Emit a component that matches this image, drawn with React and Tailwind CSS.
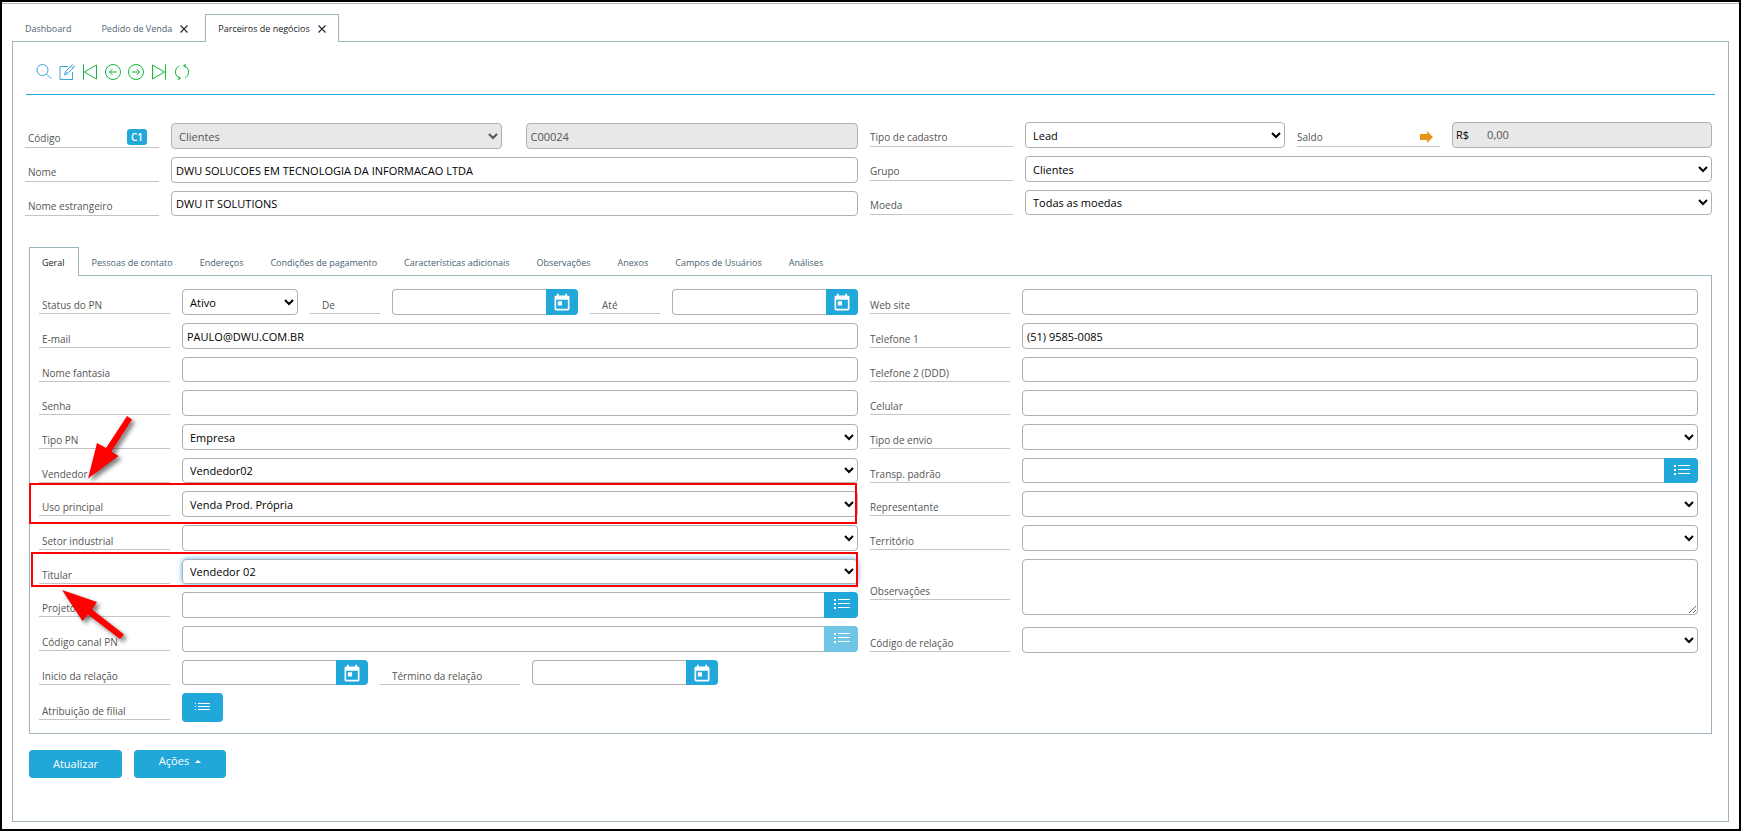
import { useState } from "react";
import { MdToday } from "react-icons/md";

const openTabs = [
    { id: "dashboard", title: "Dashboard", closable: false },
    { id: "pedido", title: "Pedido de Venda", closable: true },
    { id: "parceiros", title: "Parceiros de negócios", closable: true },
];

const formTabs = [
    "Geral",
    "Pessoas de contato",
    "Endereços",
    "Condições de pagamento",
    "Características adicionais",
    "Observações",
    "Anexos",
    "Campos de Usuários",
    "Análises",
];

function Icon({ children, className = "" }) {
    return (
        <svg viewBox="0 0 16 16" className={`w-4 h-4 ${className}`} fill="none" stroke="currentColor" strokeWidth="1">
            {children}
        </svg>
    );
}

const toolbar = [
    {
        title: "Pesquisar",
        color: "text-[#3aa5dc]",
        icon: <><circle cx="6.5" cy="6" r="5.5" /><path d="M10.5 10l5 5" /></>,
    },
    {
        title: "Editar",
        color: "text-[#3aa5dc]",
        icon: <><path d="M9 2.5H1v13h12.500V8" /><path d="M5.500 11l1-3.500L13.500.8l2 2-7 6.800zM12 2.300l2 2M6.500 7.700l2 2" /></>,
    },
    {
        title: "Primeiro",
        color: "text-[#14b53c]",
        icon: <path d="M1.500 .5v15M14.500 1v14L2.500 8z" />,
    },
    {
        title: "Anterior",
        color: "text-[#14b53c]",
        icon: <><circle cx="8" cy="8" r="7.500" /><path d="M12 8H4.500M7.500 5l-3 3 3 3" /></>,
    },
    {
        title: "Próximo",
        color: "text-[#14b53c]",
        icon: <><circle cx="8" cy="8" r="7.500" /><path d="M4 8h7.500M8.500 5l3 3-3 3" /></>,
    },
    {
        title: "Último",
        color: "text-[#14b53c]",
        icon: <path d="M14.500 .5v15M1.500 1v14l12-7z" />,
    },
    {
        title: "Atualizar registro",
        color: "text-[#14b53c]",
        icon: <><path d="M6.500 14.500C3.500 14 1.500 11.300 1.500 8c0-2.500 1.300-4.800 3.300-5.900M4.300 12.300l2.200 2.200-2.500 1" /><path d="M9.500 1.500c3 .5 5 3.200 5 6.500 0 2.500-1.300 4.800-3.300 5.900M11.700 3.700L9.500 1.500l2.500-1" /></>,
    },
];

function ListIcon() {
    return (
        <svg viewBox="0 0 16 10" className="w-4 h-[10px]" fill="currentColor">
            <path d="M0 0h2v2H0zM0 4h2v2H0zM0 8h2v2H0zM4 0h12v1H4zM4 4h12v1H4zM4 8h12v1H4z" />
        </svg>
    );
}

const control = "min-w-0 h-full rounded-[4px] border border-[#b0b0b0] text-[11px] text-black";
const disabledControl = "disabled:bg-[#e8e8e8] disabled:text-[#555] disabled:opacity-100";

function Row({ children, className = "" }) {
    return <div className={`flex gap-3 h-[26px] nth-[3n]:h-[25px] ${className}`}>{children}</div>;
}

function Label({ htmlFor, children, extra, className = "pb-px" }) {
    return (
        <div className={`h-[25px] shrink-0 flex items-end justify-between border-b border-[#c4c4c4] ${className}`}>
            <label htmlFor={htmlFor} className="text-[10px] leading-[14px] text-[#555] whitespace-nowrap">
                {children}
            </label>
            {extra}
        </div>
    );
}

function TextInput({ id, value = "", disabled, className = "flex-1" }) {
    return (
        <input
            id={id}
            type="text"
            defaultValue={value}
            disabled={disabled}
            className={`${control} ${disabledControl} px-1 ${className}`}
        />
    );
}

function Select({ id, value = "", disabled, className = "" }) {
    return (
        <select id={id} disabled={disabled} className={`${control} ${disabledControl} flex-1 px-[3px] ${className}`}>
            <option>{value}</option>
        </select>
    );
}

function DateInput({ id, title }) {
    return (
        <div className="flex h-full w-[186px]">
            <input id={id} type="text" className={`${control} flex-1 rounded-r-none border-r-0 px-1`} />
            <button type="button" aria-label={title} className="w-8 shrink-0 rounded-r-[4px] bg-[#21a7d9] pt-[2px] text-white flex items-center justify-center">
                <MdToday size={20} />
            </button>
        </div>
    );
}

function LookupInput({ id, title, disabled }) {
    return (
        <div className="flex flex-1 h-full">
            <input id={id} type="text" className={`${control} flex-1 rounded-r-none border-r-0 px-1`} />
            <button
                type="button"
                aria-label={title}
                disabled={disabled}
                className="w-[34px] shrink-0 rounded-r-[4px] bg-[#21a7d9] pb-[2px] pl-[2px] text-white flex items-center justify-center disabled:opacity-65"
            >
                <ListIcon />
            </button>
        </div>
    );
}

function Header() {
    const left = "w-[134px] pl-[3px] pb-[2px]";
    const right = "w-[143px] pb-[2px]";

    return (
        <div className="mt-[27px] ml-3 mr-4 grid grid-cols-[833fr_842fr] gap-3">
            <div className="flex flex-col gap-2 pt-px">
                <Row>
                    <Label
                        htmlFor="codigo"
                        className={left}
                        extra={<span className="mr-3 h-4 rounded-[3px] bg-[#21a7d9] px-1 text-[10px] leading-4 font-semibold text-white">C1</span>}
                    >
                        Código
                    </Label>
                    <div className="flex flex-1 gap-6">
                        <Select id="codigo" value="Clientes" disabled />
                        <TextInput id="codigo-pn" value="C00024" disabled />
                    </div>
                </Row>
                <Row>
                    <Label htmlFor="nome" className={left}>Nome</Label>
                    <TextInput id="nome" value="DWU SOLUCOES EM TECNOLOGIA DA INFORMACAO LTDA" />
                </Row>
                <Row>
                    <Label htmlFor="nome-estrangeiro" className={left}>Nome estrangeiro</Label>
                    <TextInput id="nome-estrangeiro" value="DWU IT SOLUTIONS" />
                </Row>
            </div>
            <div className="flex flex-col gap-2">
                <Row>
                    <Label htmlFor="tipo-cadastro" className={right}>Tipo de cadastro</Label>
                    <Select id="tipo-cadastro" value="Lead" />
                    <Label
                        htmlFor="saldo"
                        className={right}
                        extra={
                            <svg viewBox="0 0 13 12" className="mr-[7px] mb-px w-[13px] h-3" fill="#e6951a">
                                <path d="M0 3h7V0l6 6-6 6V9H0z" />
                            </svg>
                        }
                    >
                        Saldo
                    </Label>
                    <div className={`${control} flex flex-1 items-center bg-[#e8e8e8] px-[3px]`}>
                        <span>R$</span>
                        <input id="saldo" type="text" disabled defaultValue="0,00" className="ml-[18px] min-w-0 flex-1 text-[#555]" />
                    </div>
                </Row>
                <Row>
                    <Label htmlFor="grupo" className={right}>Grupo</Label>
                    <Select id="grupo" value="Clientes" />
                </Row>
                <Row>
                    <Label htmlFor="moeda" className={right}>Moeda</Label>
                    <Select id="moeda" value="Todas as moedas" />
                </Row>
            </div>
        </div>
    );
}

function GeneralLeft() {
    const label = "w-[131px] pl-[3px] pb-px";

    return (
        <div className="relative flex flex-col gap-2">
            <Row>
                <Label htmlFor="status" className={label}>Status do PN</Label>
                <Select id="status" value="Ativo" />
                <Label htmlFor="de" className="w-[70px] pl-3 pb-px">De</Label>
                <DateInput id="de" title="Escolher data inicial" />
                <Label htmlFor="ate" className="w-[70px] pl-3 pb-px">Até</Label>
                <DateInput id="ate" title="Escolher data final" />
            </Row>
            <Row>
                <Label htmlFor="email" className={label}>E-mail</Label>
                <TextInput id="email" value="PAULO@DWU.COM.BR" />
            </Row>
            <Row>
                <Label htmlFor="fantasia" className={label}>Nome fantasia</Label>
                <TextInput id="fantasia" />
            </Row>
            <Row>
                <Label htmlFor="senha" className={label}>Senha</Label>
                <TextInput id="senha" />
            </Row>
            <Row>
                <Label htmlFor="tipo-pn" className={label}>Tipo PN</Label>
                <Select id="tipo-pn" value="Empresa" />
            </Row>
            <Row>
                <Label htmlFor="vendedor" className={label}>Vendedor</Label>
                <Select id="vendedor" value="Vendedor02" />
            </Row>
            <Row className="relative">
                <Label htmlFor="uso" className={label}>Uso principal</Label>
                <Select id="uso" value="Venda Prod. Própria" />
                <div className="absolute -top-2 right-px -bottom-[7px] -left-[10px] border-2 border-[#ff0000] pointer-events-none" />
            </Row>
            <Row>
                <Label htmlFor="setor" className={label}>Setor industrial</Label>
                <Select id="setor" />
            </Row>
            <Row className="relative">
                <Label htmlFor="titular" className={label}>Titular</Label>
                <Select id="titular" value="Vendedor 02" className="shadow-[0_0_5px_#4db5f5]" />
                <div className="absolute -top-[7px] right-0 -bottom-[3px] -left-2 border-2 border-[#ff0000] pointer-events-none" />
            </Row>
            <Row>
                <Label htmlFor="projeto" className={label}>Projeto</Label>
                <LookupInput id="projeto" title="Buscar projeto" />
            </Row>
            <Row>
                <Label htmlFor="canal" className={label}>Código canal PN</Label>
                <LookupInput id="canal" title="Buscar canal" disabled />
            </Row>
            <Row>
                <Label htmlFor="inicio" className={label}>Inicio da relação</Label>
                <DateInput id="inicio" title="Escolher início" />
                <Label htmlFor="termino" className="w-[140px] pl-3 pb-px">Término da relação</Label>
                <DateInput id="termino" title="Escolher término" />
            </Row>
            <div className="flex items-center gap-3">
                <Label htmlFor="filial" className={label}>Atribuição de filial</Label>
                <button id="filial" type="button" className="w-[41px] h-[29px] rounded-[4px] bg-[#21a7d9] pb-[2px] text-white flex items-center justify-center">
                    <svg viewBox="0 0 15 7" className="w-[15px] h-[7px]" fill="currentColor">
                        <path d="M0 0h1v1H0zM0 3h1v1H0zM0 6h1v1H0zM3 0h12v1H3zM3 3h12v1H3zM3 6h12v1H3z" />
                    </svg>
                </button>
            </div>

            {/* red arrows pointing at "Uso principal" and "Titular" */}
            <svg
                viewBox="39 290 110 370"
                className="absolute top-0 left-0 w-[110px] h-[370px] pointer-events-none drop-shadow-[3px_3px_2px_rgba(0,0,0,0.5)]"
                fill="#ff0000"
            >
                <path d="M88 479.500L97 444l9 5 21-32 5 3.500-20.500 32 7 4.500z" />
                <path d="M62 591l35 12-5 7.500 32 25-4 4.500-32-24.500-5.500 6.500z" />
            </svg>
        </div>
    );
}

function GeneralRight() {
    const label = "w-[140px] pb-px";

    return (
        <div className="flex flex-col gap-2">
            <Row>
                <Label htmlFor="site" className={label}>Web site</Label>
                <TextInput id="site" />
            </Row>
            <Row>
                <Label htmlFor="telefone1" className={label}>Telefone 1</Label>
                <TextInput id="telefone1" value="(51) 9585-0085" />
            </Row>
            <Row>
                <Label htmlFor="telefone2" className={label}>Telefone 2 (DDD)</Label>
                <TextInput id="telefone2" />
            </Row>
            <Row>
                <Label htmlFor="celular" className={label}>Celular</Label>
                <TextInput id="celular" />
            </Row>
            <Row>
                <Label htmlFor="envio" className={label}>Tipo de envio</Label>
                <Select id="envio" />
            </Row>
            <Row>
                <Label htmlFor="transp" className={label}>Transp. padrão</Label>
                <LookupInput id="transp" title="Buscar transportadora" />
            </Row>
            <Row>
                <Label htmlFor="representante" className={label}>Representante</Label>
                <Select id="representante" />
            </Row>
            <Row>
                <Label htmlFor="territorio" className={label}>Território</Label>
                <Select id="territorio" />
            </Row>
            <div className="mb-1 flex items-center gap-3">
                <Label htmlFor="observacoes" className={label}>Observações</Label>
                <textarea id="observacoes" className="h-14 min-w-0 flex-1 rounded-[4px] border border-[#b0b0b0] px-1 text-[11px]" />
            </div>
            <Row>
                <Label htmlFor="relacao" className={label}>Código de relação</Label>
                <Select id="relacao" />
            </Row>
        </div>
    );
}

export default function App() {
    const [activeTab, setActiveTab] = useState("parceiros");
    const [activeForm, setActiveForm] = useState("Geral");

    return (
        <div className="min-h-screen flex flex-col border-2 border-black bg-white pt-px font-['Open_Sans',sans-serif]">
            <div className="flex flex-1 flex-col border-t border-[#b5b5b5] px-[10px] pt-[10px] pb-[7px]">
                <nav className="relative -mb-px flex gap-1">
                    {openTabs.map((tab) => (
                        <div
                            key={tab.id}
                            className={`flex h-7 items-center gap-2 border border-b-0 px-3 ${
                                activeTab === tab.id
                                    ? "border-[#9fb3bd] bg-white text-[#222]"
                                    : "border-transparent text-[#52656f]"
                            }`}
                        >
                            <button type="button" onClick={() => setActiveTab(tab.id)} className="text-[9px] leading-[14px]">
                                {tab.title}
                            </button>
                            {tab.closable && (
                                <button type="button" aria-label={`Fechar ${tab.title}`} className="text-[#222]">
                                    <svg viewBox="0 0 8 8" className="w-2 h-2" fill="none" stroke="currentColor" strokeWidth="1.1">
                                        <path d="M.5 .5l7 7M7.500 .5l-7 7" />
                                    </svg>
                                </button>
                            )}
                        </div>
                    ))}
                </nav>

                <main className="flex-1 border border-[#9fb3bd]">
                    <div className="mx-[13px] flex h-[53px] items-center gap-[7px] border-b border-[#21a7d9] pt-2 pl-[10px]">
                        {toolbar.map((item) => (
                            <button key={item.title} type="button" aria-label={item.title} className={item.color}>
                                <Icon>{item.icon}</Icon>
                            </button>
                        ))}
                    </div>

                    <Header />

                    <div className="mt-[31px] mx-4">
                        <div className="relative -mb-px flex">
                            {formTabs.map((name) => (
                                <button
                                    key={name}
                                    type="button"
                                    onClick={() => setActiveForm(name)}
                                    className={`h-[29px] border border-b-0 pl-3 pr-[13px] pt-[2px] text-[9px] leading-[14px] whitespace-nowrap ${
                                        activeForm === name
                                            ? "border-[#9fb3bd] bg-white text-[#222]"
                                            : "border-transparent text-[#4a6270]"
                                    }`}
                                >
                                    {name}
                                </button>
                            ))}
                        </div>
                        <div className="grid grid-cols-[819fr_828fr] gap-3 border border-[#9fb3bd] pt-[13px] pr-[13px] pb-[11px] pl-[9px]">
                            <GeneralLeft />
                            <GeneralRight />
                        </div>
                    </div>

                    <div className="mt-4 mx-4 mb-8 flex gap-3">
                        <button type="button" className="h-7 w-[93px] rounded-[4px] bg-[#21a7d9] text-[11px] text-white">
                            Atualizar
                        </button>
                        <button type="button" className="flex h-7 w-[92px] justify-center gap-[6px] rounded-[4px] bg-[#21a7d9] pt-1 text-[11px] leading-[14px] text-white">
                            Ações
                            <svg viewBox="0 0 6 3" className="mt-[6px] w-[6px] h-[3px]" fill="currentColor">
                                <path d="M0 3l3-3 3 3z" />
                            </svg>
                        </button>
                    </div>
                </main>
            </div>
        </div>
    );
}
